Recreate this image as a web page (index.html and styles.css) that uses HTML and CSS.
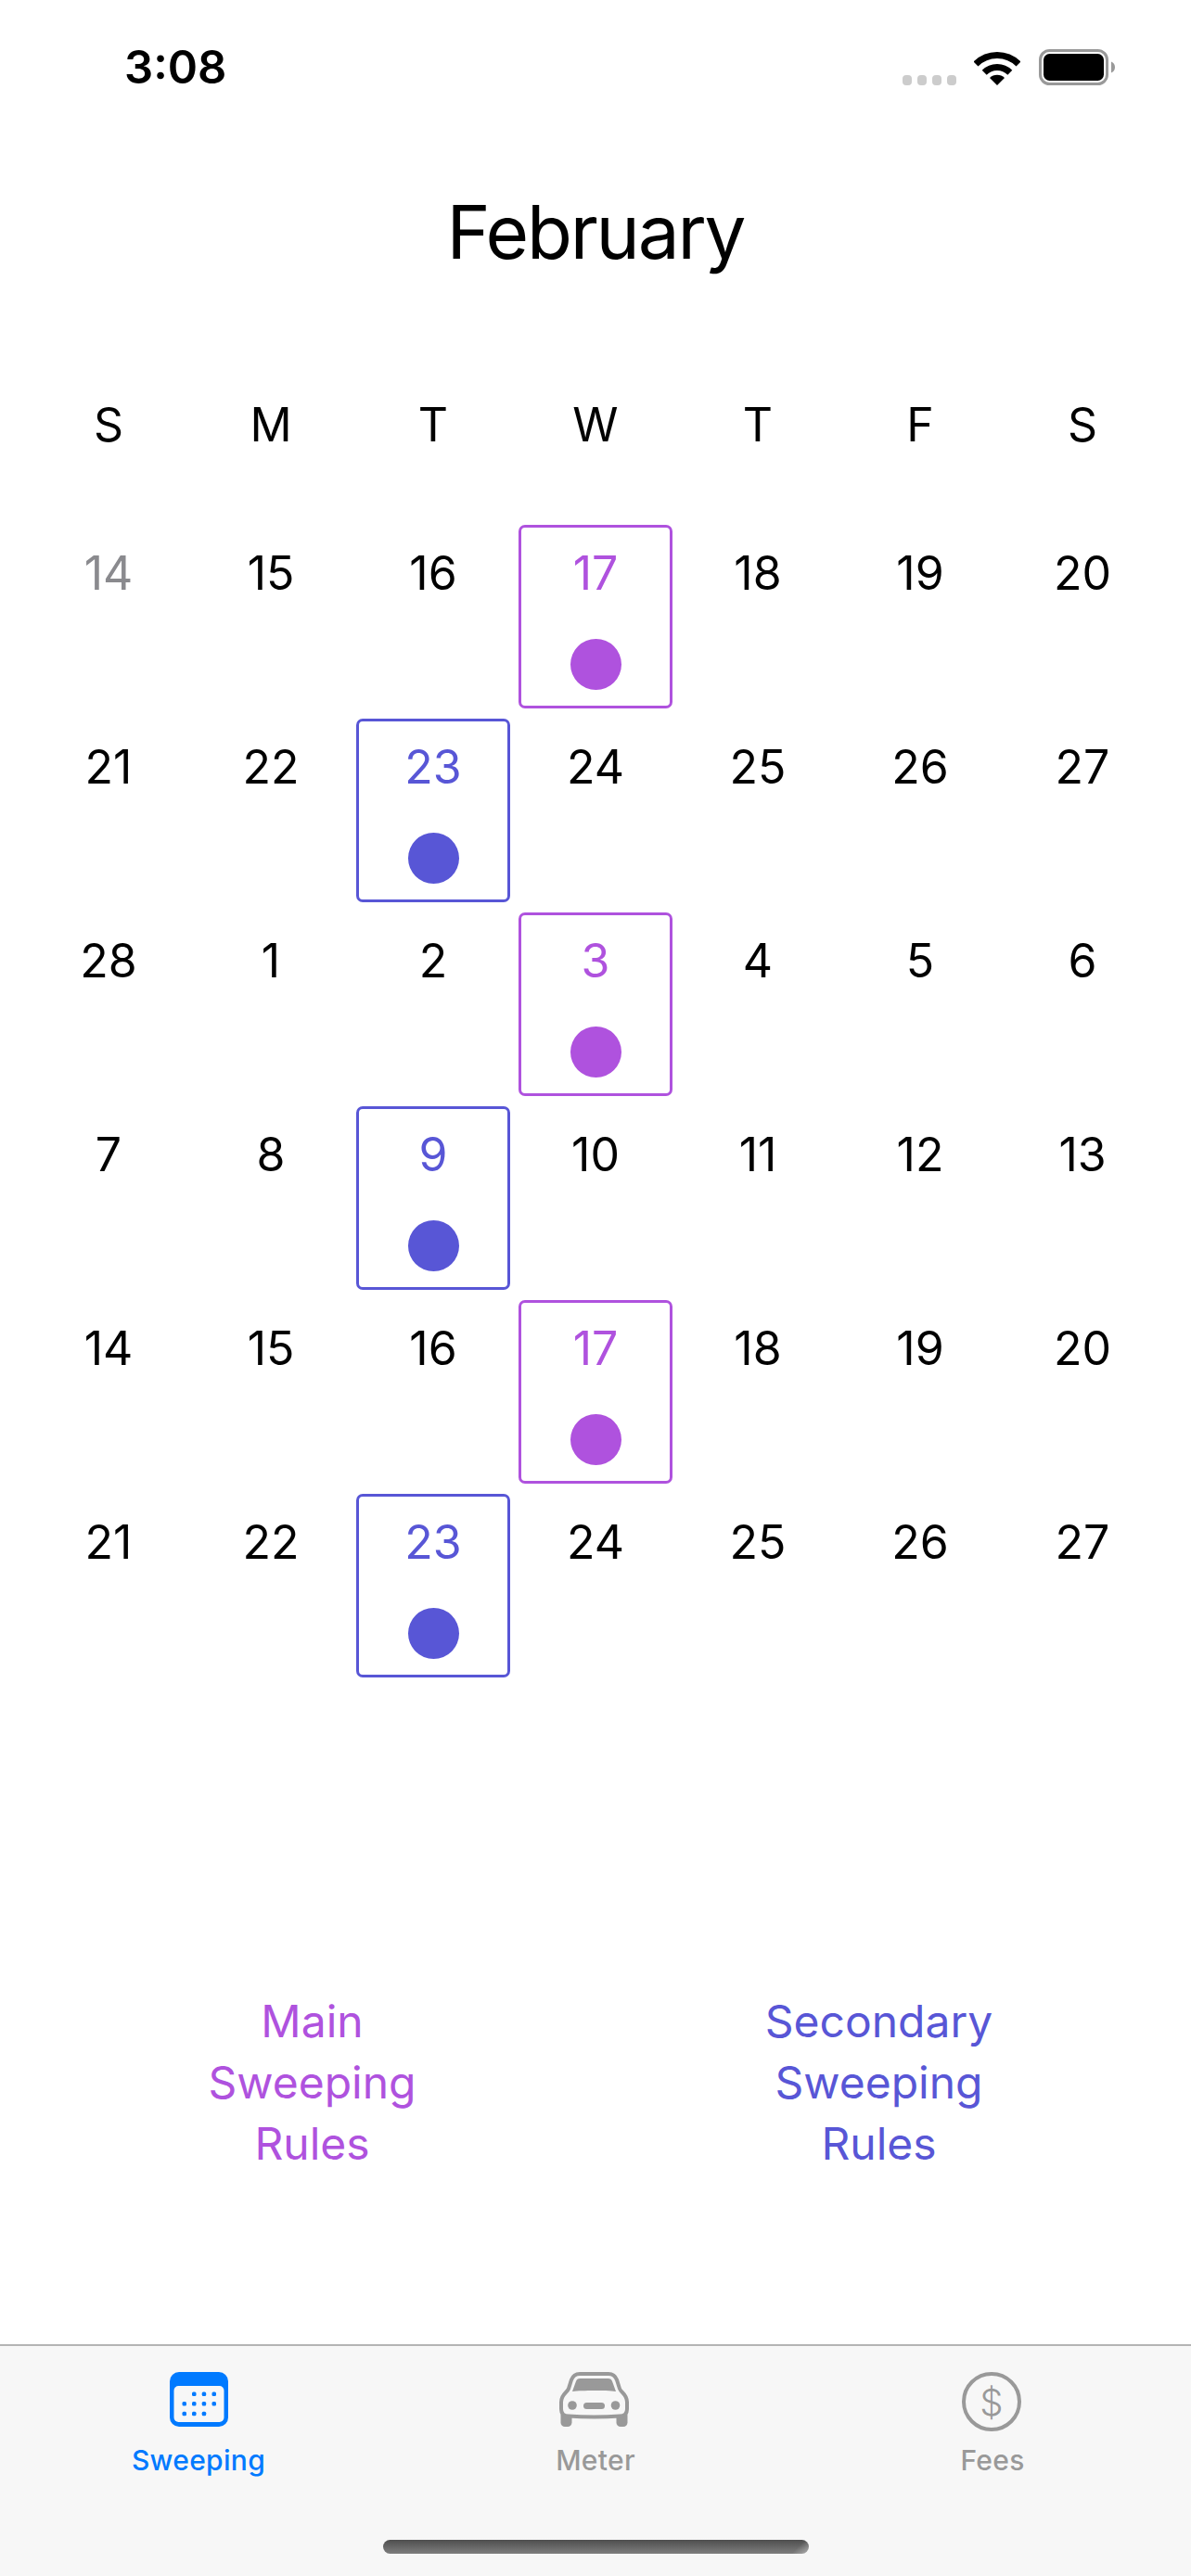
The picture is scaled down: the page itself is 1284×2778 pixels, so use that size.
FILE: index.html
```html
<!DOCTYPE html>
<html lang="en">

<head>
    <meta charset="UTF-8">
    <meta name="viewport" content="width=device-width, initial-scale=1.0">
    <title>Sweeping</title>
    <link rel="stylesheet" href="styles.css">
</head>

<body>
<div class="screen">

	<div class="status-bar">
		<span class="time">3:08</span>
		<div class="status-icons">
			<div class="signal"><i></i><i></i><i></i><i></i></div>
			<svg class="wifi" width="50" height="37" viewBox="0 0 50 37">
				<path d="M2 14A32.5 32.5 0 0 1 48 14" fill="none" stroke="#000" stroke-width="7"/>
				<path d="M11.2 23.2A19.5 19.5 0 0 1 38.8 23.2" fill="none" stroke="#000" stroke-width="7"/>
				<path d="M25 37L17 29A11.3 11.3 0 0 1 33 29Z" fill="#000"/>
			</svg>
			<svg class="battery" width="82" height="39" viewBox="0 0 82 39">
				<rect x="1.5" y="1.5" width="72" height="36" rx="10" fill="none" stroke="#999" stroke-width="3"/>
				<rect x="5" y="5" width="65" height="29" rx="6.5" fill="#000"/>
				<path d="M78 13.5C80.500 14.500 82 16.500 82 19.500C82 22.500 80.500 24.500 78 25.500Z" fill="#999"/>
			</svg>
		</div>
	</div>

	<main>
		<h1>February</h1>

		<div class="calendar">
			<div class="weekday">S</div>
			<div class="weekday">M</div>
			<div class="weekday">T</div>
			<div class="weekday">W</div>
			<div class="weekday">T</div>
			<div class="weekday">F</div>
			<div class="weekday">S</div>

			<div class="day muted">14</div>
			<div class="day">15</div>
			<div class="day">16</div>
			<div class="day main-day">17<span class="dot"></span></div>
			<div class="day">18</div>
			<div class="day">19</div>
			<div class="day">20</div>

			<div class="day">21</div>
			<div class="day">22</div>
			<div class="day second-day">23<span class="dot"></span></div>
			<div class="day">24</div>
			<div class="day">25</div>
			<div class="day">26</div>
			<div class="day">27</div>

			<div class="day">28</div>
			<div class="day">1</div>
			<div class="day">2</div>
			<div class="day main-day">3<span class="dot"></span></div>
			<div class="day">4</div>
			<div class="day">5</div>
			<div class="day">6</div>

			<div class="day">7</div>
			<div class="day">8</div>
			<div class="day second-day">9<span class="dot"></span></div>
			<div class="day">10</div>
			<div class="day">11</div>
			<div class="day">12</div>
			<div class="day">13</div>

			<div class="day">14</div>
			<div class="day">15</div>
			<div class="day">16</div>
			<div class="day main-day">17<span class="dot"></span></div>
			<div class="day">18</div>
			<div class="day">19</div>
			<div class="day">20</div>

			<div class="day">21</div>
			<div class="day">22</div>
			<div class="day second-day">23<span class="dot"></span></div>
			<div class="day">24</div>
			<div class="day">25</div>
			<div class="day">26</div>
			<div class="day">27</div>
		</div>

		<div class="rules">
			<div class="rule main-rule">Main<br>Sweeping<br>Rules</div>
			<div class="rule second-rule">Secondary<br>Sweeping<br>Rules</div>
		</div>
	</main>

	<footer class="tab-bar">
		<div class="tabs">
			<div class="tab active">
				<svg width="63" height="59" viewBox="0 0 63 59">
					<rect width="63" height="59" rx="10" fill="#007aff"/>
					<rect x="4.500" y="15" width="54" height="39" rx="5" fill="#f7f7f7"/>
					<g fill="#007aff">
						<rect x="24" y="21.500" width="4.500" height="4.500" rx="1.500"/>
						<rect x="34.700" y="21.500" width="4.500" height="4.500" rx="1.500"/>
						<rect x="45.500" y="21.500" width="4.500" height="4.500" rx="1.500"/>
						<rect x="13.500" y="32" width="4.500" height="4.500" rx="1.500"/>
						<rect x="24" y="32" width="4.500" height="4.500" rx="1.500"/>
						<rect x="34.700" y="32" width="4.500" height="4.500" rx="1.500"/>
						<rect x="45.500" y="32" width="4.500" height="4.500" rx="1.500"/>
						<rect x="13.500" y="42.700" width="4.500" height="4.500" rx="1.500"/>
						<rect x="24" y="42.700" width="4.500" height="4.500" rx="1.500"/>
						<rect x="34.700" y="42.700" width="4.500" height="4.500" rx="1.500"/>
					</g>
				</svg>
				<span>Sweeping</span>
			</div>
			<div class="tab">
				<svg class="car" width="75" height="59" viewBox="0 0 75 59">
					<g fill="#999">
						<rect x="1.500" y="42" width="12" height="17" rx="4.500"/>
						<rect x="61.500" y="42" width="12" height="17" rx="4.500"/>
					</g>
					<path d="M22 2H53C58 2 60.500 4.500 62 8.500L65 18C65.500 19.500 66.500 20.500 68 22C71 25 73 28 73 32.500V40C73 44.500 70.500 47.500 65 47.500C56 48.200 47 48.500 37.500 48.500C28 48.500 19 48.200 10 47.500C4.500 47.500 2 44.500 2 40V32.500C2 28 4 25 7 22C8.500 20.500 9.500 19.500 10 18L13 8.500C14.500 4.500 17 2 22 2Z" fill="#f7f7f7" stroke="#999" stroke-width="4"/>
					<path d="M14 21L18 10C18.700 8 20 7 22.500 7H52.500C55 7 56.300 8 57 10L61 21C50 19.800 25 19.800 14 21Z" fill="#999"/>
					<circle cx="14" cy="36" r="4.800" fill="#999"/>
					<circle cx="60.500" cy="36" r="4.800" fill="#999"/>
					<rect x="26" y="33" width="23" height="7" rx="3.500" fill="#999"/>
				</svg>
				<span>Meter</span>
			</div>
			<div class="tab">
				<svg width="64" height="64" viewBox="0 0 64 64" class="coin">
					<circle cx="32" cy="32" r="30" fill="none" stroke="#999" stroke-width="4"/>
					<text x="32" y="46.500" text-anchor="middle" class="coin-sign">$</text>
				</svg>
				<span>Fees</span>
			</div>
		</div>
		<div class="home-bar"></div>
	</footer>

</div>
</body>
</html>
```

FILE: styles.css
```css
body {
	margin: 0;
	padding: 0;
	background-color: #fff;
	color: #000;
	font-family: Inter, "Liberation Sans", sans-serif;
}

.screen {
	display: flex;
	flex-direction: column;
	height: 2778px;
	overflow: hidden;
}

/* status bar */
.status-bar {
	display: flex;
	justify-content: space-between;
	align-items: flex-start;
	height: 130px;
	padding: 43px 82px 0 134px;
	box-sizing: border-box;
}

.time {
	font-size: 49px;
	font-weight: 600;
	line-height: 60px;
}

.status-icons {
	display: flex;
	align-items: flex-end;
	padding-top: 10px;
}

.signal {
	display: flex;
	gap: 6px;
	margin-right: 19px;
}

.signal i {
	width: 10px;
	height: 11px;
	border-radius: 4px;
	background-color: #ccc;
}

.wifi {
	margin-right: 20px;
}

/* calendar */
main {
	flex: 1;
}

h1 {
	margin: 0;
	padding-top: 70px;
	font-size: 80px;
	font-weight: 400;
	line-height: 100px;
	letter-spacing: -2.2px;
	text-align: center;
}

.calendar {
	display: grid;
	grid-template-columns: repeat(7, 166px);
	grid-template-rows: 255px;
	grid-auto-rows: 198px;
	gap: 11px 9px;
	padding: 0 34px;
}

.weekday {
	padding-top: 128px;
	font-size: 50px;
	line-height: 60px;
	text-align: center;
}

.day {
	display: flex;
	flex-direction: column;
	justify-content: space-between;
	align-items: center;
	padding: 19px 0 17px;
	border: 3px solid transparent;
	border-radius: 7px;
	box-sizing: border-box;
	font-size: 50px;
	line-height: 60px;
}

.dot {
	width: 55px;
	height: 55px;
	border-radius: 50%;
	background-color: currentColor;
}

.muted {
	color: #8a8a8e;
}

.main-day {
	color: #af52de;
	border-color: #af52de;
}

.second-day {
	color: #5856d6;
	border-color: #5856d6;
}

/* rule buttons */
.rules {
	display: grid;
	grid-template-columns: 1fr 1fr;
	padding: 0 31px;
	margin-top: 338px;
}

.rule {
	font-size: 48px;
	line-height: 66px;
	text-align: center;
}

.main-rule {
	color: #af52de;
}

.second-rule {
	color: #5856d6;
}

/* tab bar */
.tab-bar {
	height: 250px;
	border-top: 2px solid #b4b4b4;
	box-sizing: border-box;
	background-color: #f7f7f7;
}

.tabs {
	display: grid;
	grid-template-columns: repeat(3, 1fr);
	height: 209px;
	padding-top: 28px;
	box-sizing: border-box;
}

.tab {
	display: flex;
	flex-direction: column;
	align-items: center;
	color: #999;
	font-size: 30px;
	font-weight: 500;
	line-height: 36px;
	letter-spacing: 0.3px;
}

.tab svg {
	margin-bottom: 18px;
}

.tab .car {
	margin-right: 3px;
}

.tab .coin {
	margin: 0 2px 13px 0;
}

.coin-sign {
	fill: #999;
	font-size: 40px;
	font-weight: 300;
}

.active {
	color: #007aff;
}

.home-bar {
	width: 459px;
	height: 15px;
	margin: 0 auto;
	border-radius: 8px;
	background: linear-gradient(135deg, transparent 96%, rgba(255, 255, 255, 0.4)), linear-gradient(#4e4e4e, #7e7e7e);
}
```
